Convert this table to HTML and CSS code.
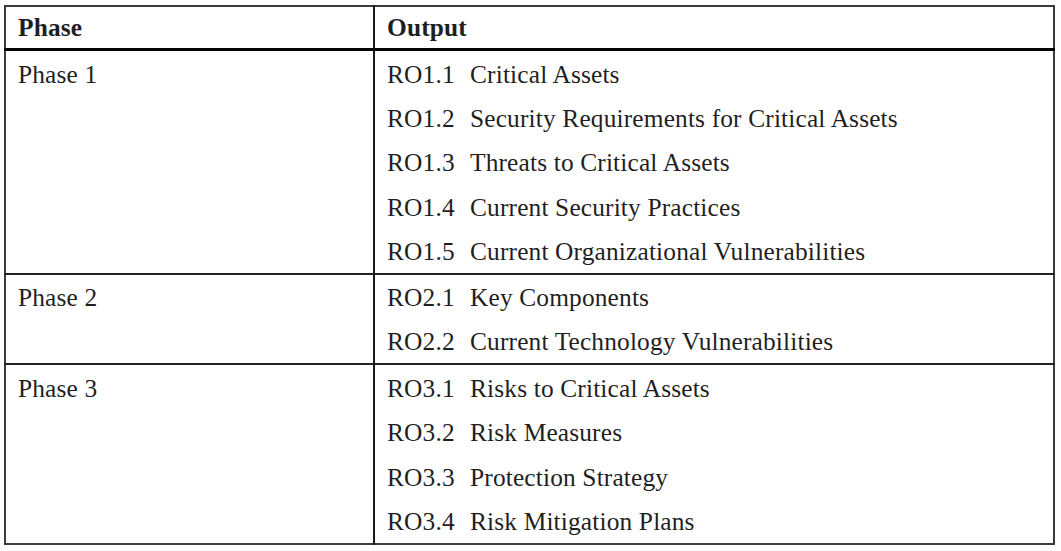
FILE: index.html
```html
<!DOCTYPE html>
<html>
<head>
<meta charset="utf-8">
<link rel="stylesheet" href="styles.css">
</head>
<body>
<table class="outputs">
  <thead>
    <tr>
      <th class="col-phase">Phase</th>
      <th class="col-output">Output</th>
    </tr>
  </thead>
  <tbody>
    <tr>
      <td class="phase">Phase 1</td>
      <td class="items">
        <div class="item"><span class="code">RO1.1</span>Critical Assets</div>
        <div class="item"><span class="code">RO1.2</span>Security Requirements for Critical Assets</div>
        <div class="item"><span class="code">RO1.3</span>Threats to Critical Assets</div>
        <div class="item"><span class="code">RO1.4</span>Current Security Practices</div>
        <div class="item"><span class="code">RO1.5</span>Current Organizational Vulnerabilities</div>
      </td>
    </tr>
    <tr class="short">
      <td class="phase">Phase 2</td>
      <td class="items">
        <div class="item"><span class="code">RO2.1</span>Key Components</div>
        <div class="item"><span class="code">RO2.2</span>Current Technology Vulnerabilities</div>
      </td>
    </tr>
    <tr>
      <td class="phase">Phase 3</td>
      <td class="items">
        <div class="item"><span class="code">RO3.1</span>Risks to Critical Assets</div>
        <div class="item"><span class="code">RO3.2</span>Risk Measures</div>
        <div class="item"><span class="code">RO3.3</span>Protection Strategy</div>
        <div class="item"><span class="code">RO3.4</span>Risk Mitigation Plans</div>
      </td>
    </tr>
  </tbody>
</table>
</body>
</html>
```
FILE: styles.css
```css
html, body {
  margin: 0;
  padding: 0;
  background: #ffffff;
}
body {
  padding: 5px 0 0 4px;
  font-family: "Liberation Serif", "Times New Roman", serif;
  font-size: 25.4px;
  letter-spacing: 0.15px;
  color: #1f1f1f;
}
.outputs {
  border-collapse: collapse;
  width: 1051px;
  border: 2px solid #3c3c3c;
}
.outputs th {
  text-align: left;
  font-weight: bold;
  height: 41px;
  padding: 0 0 0 12px;
  line-height: 41px;
  border-bottom: 3px solid #050505;
  vertical-align: middle;
}
.col-phase {
  width: 355px;
  border-right: 2px solid #1a1a1a;
}
.col-output {
  padding-left: 12px !important;
}
.outputs td {
  vertical-align: top;
  border-top: 2px solid #222;
}
.phase {
  padding: 1px 0 0 12px;
  line-height: 44.2px;
  border-right: 2px solid #1a1a1a;
}
.items {
  padding: 1px 0 0 12px;
}
.item {
  line-height: 44.2px;
  white-space: nowrap;
}
.short .phase,
.short .item {
  line-height: 43.6px;
}
.code {
  display: inline-block;
  width: 83px;
}
```
